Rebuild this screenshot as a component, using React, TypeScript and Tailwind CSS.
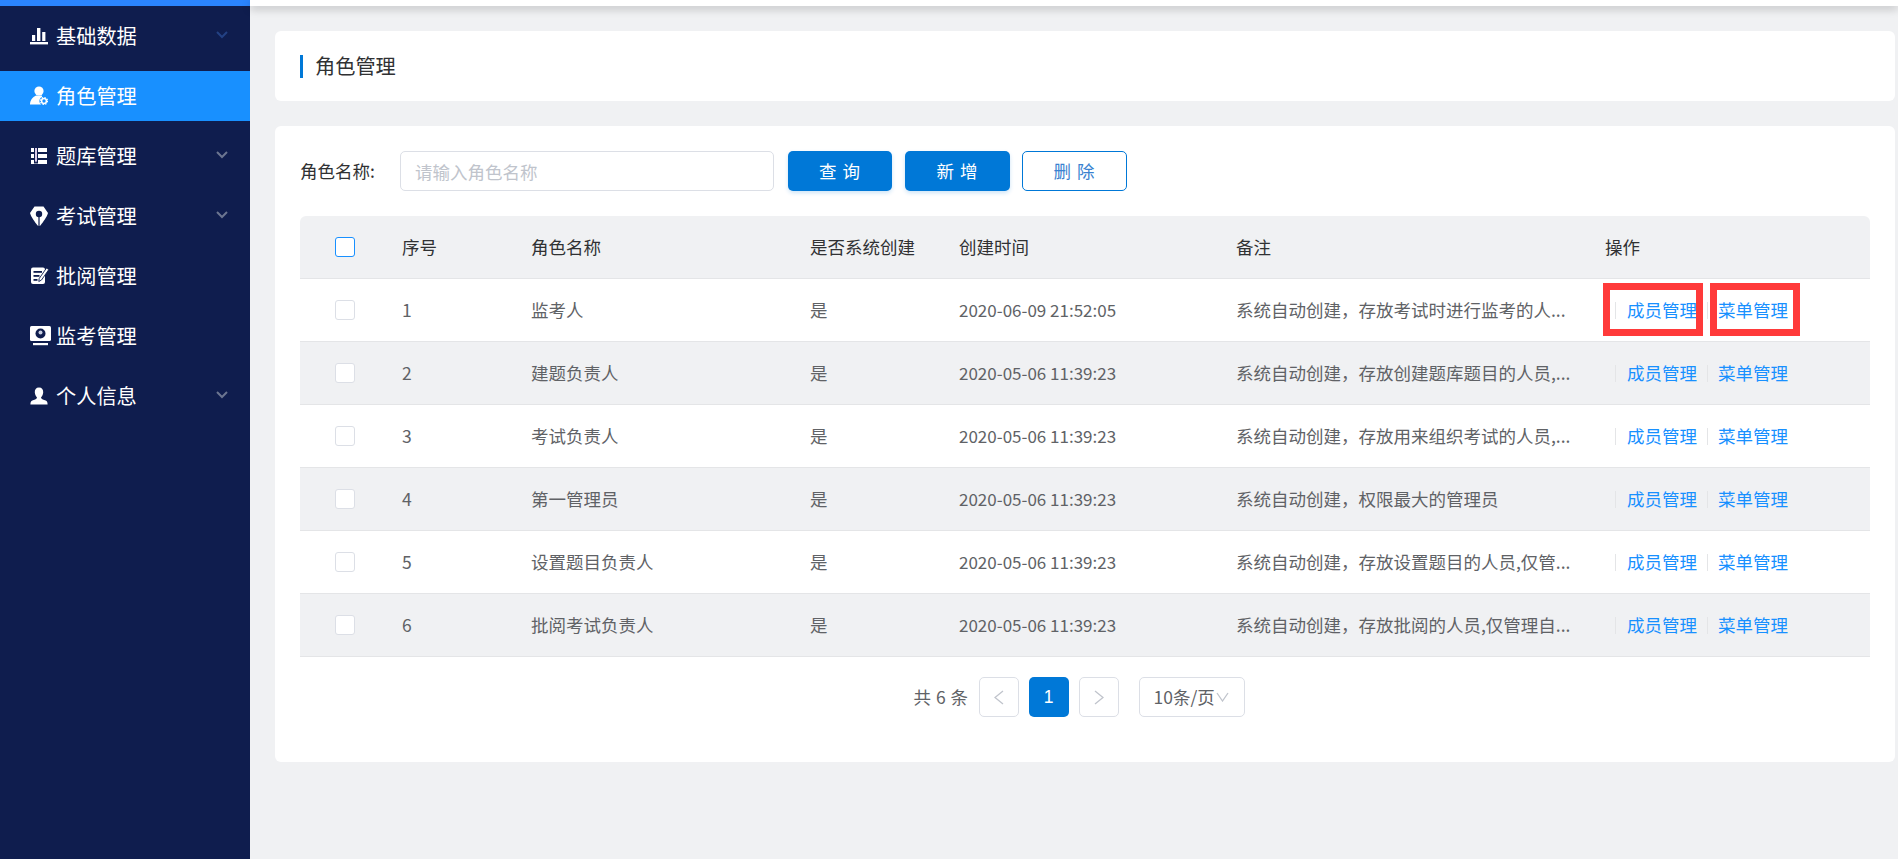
import type { ReactNode } from 'react';

const DARK = '#0f1d4e';
const ACTIVE = '#1890ff';

function ChartIcon() {
  return (
    <svg width="18" height="18" viewBox="0 0 18 18" fill="white">
      <rect x="0" y="15" width="18" height="2.4" />
      <rect x="2" y="8" width="3.2" height="6" />
      <rect x="7" y="1" width="3.4" height="13" />
      <rect x="12.2" y="5" width="3.2" height="9" />
    </svg>
  );
}

function RoleIcon() {
  return (
    <svg width="18" height="20" viewBox="0 0 18 20" fill="white">
      <circle cx="9" cy="5" r="4.6" />
      <path d="M6 9.5 L12 9.5 L12.5 18.5 L0 18.5 C0 14.5 2.5 11 6 9.5 Z" />
      <circle cx="14" cy="15" r="4.6" fill={ACTIVE} />
      <circle cx="14" cy="15" r="2.4" fill="none" stroke="white" strokeWidth="1.5" />
      <circle cx="14" cy="15" r="3.5" fill="none" stroke="white" strokeWidth="1.2" strokeDasharray="1.4 1.35" />
    </svg>
  );
}

function BankIcon() {
  return (
    <svg width="18" height="18" viewBox="0 0 18 18" fill="white">
      <rect x="1" y="1" width="16" height="4" />
      <rect x="1" y="7" width="16" height="4" />
      <rect x="1" y="13" width="16" height="4" />
      <rect x="4" y="0.5" width="4" height="16" fill={DARK} />
      <path d="M5 1 H7 V15.5 L6 14 L5 15.5 Z" fill="#d9cbe8" />
    </svg>
  );
}

function PinIcon() {
  return (
    <svg width="18" height="20" viewBox="0 0 18 20" fill="white">
      <path d="M4.5 0.5 H13.5 L18 7 C17 11 13 16 10.5 19.5 H7.5 C5 16 1 11 0 7 Z" />
      <circle cx="9" cy="8" r="3.2" fill={DARK} />
      <rect x="8.4" y="10.5" width="1.2" height="9" fill={DARK} />
    </svg>
  );
}

function ReviewIcon() {
  return (
    <svg width="19" height="18" viewBox="0 0 19 18">
      <rect x="1" y="0.5" width="14" height="16.5" rx="2" fill="white" />
      <rect x="3.5" y="4" width="8.5" height="1.8" fill={DARK} />
      <rect x="3.5" y="8" width="6" height="1.8" fill={DARK} />
      <rect x="3.5" y="12" width="4" height="1.8" fill={DARK} />
      <path d="M16.5 1 L18.8 2.6 L11.5 13 L8.8 14.5 L9.2 11.5 Z" fill="white" stroke={DARK} strokeWidth="0.9" />
    </svg>
  );
}

function MonitorIcon() {
  return (
    <svg width="21" height="20" viewBox="0 0 21 20" fill="white">
      <rect x="0" y="0" width="21" height="15" rx="1.5" />
      <rect x="3" y="17" width="15" height="2.2" />
      <circle cx="10.5" cy="7.5" r="5" fill={DARK} />
      <circle cx="10.5" cy="6.4" r="2" fill="#c7cde0" />
    </svg>
  );
}

function UserIcon() {
  return (
    <svg width="18" height="18" viewBox="0 0 18 18" fill="white">
      <path d="M9 0.5 C12 0.5 13.4 2.6 13.2 5.4 C13 8 11.6 9.6 11 10.4 C11.2 12 13 12.6 15 13.2 C16.8 13.8 17.6 14.8 17.6 17.6 H0.4 C0.4 14.8 1.2 13.8 3 13.2 C5 12.6 6.8 12 7 10.4 C6.4 9.6 5 8 4.8 5.4 C4.6 2.6 6 0.5 9 0.5 Z" />
    </svg>
  );
}

interface MenuItem {
  label: string;
  icon: ReactNode;
  active?: boolean;
  arrow?: string;
}

const menu: MenuItem[] = [
  { label: '基础数据', icon: <ChartIcon />, arrow: 'text-[#234183]' },
  { label: '角色管理', icon: <RoleIcon />, active: true },
  { label: '题库管理', icon: <BankIcon />, arrow: 'text-[#6b7590]' },
  { label: '考试管理', icon: <PinIcon />, arrow: 'text-[#6b7590]' },
  { label: '批阅管理', icon: <ReviewIcon /> },
  { label: '监考管理', icon: <MonitorIcon /> },
  { label: '个人信息', icon: <UserIcon />, arrow: 'text-[#6b7590]' },
];

const rows = [
  { id: 1, name: '监考人', time: '2020-06-09 21:52:05', note: '系统自动创建，存放考试时进行监考的人...' },
  { id: 2, name: '建题负责人', time: '2020-05-06 11:39:23', note: '系统自动创建，存放创建题库题目的人员,...' },
  { id: 3, name: '考试负责人', time: '2020-05-06 11:39:23', note: '系统自动创建，存放用来组织考试的人员,...' },
  { id: 4, name: '第一管理员', time: '2020-05-06 11:39:23', note: '系统自动创建，权限最大的管理员' },
  { id: 5, name: '设置题目负责人', time: '2020-05-06 11:39:23', note: '系统自动创建，存放设置题目的人员,仅管...' },
  { id: 6, name: '批阅考试负责人', time: '2020-05-06 11:39:23', note: '系统自动创建，存放批阅的人员,仅管理自...' },
];

const cols = 'grid grid-cols-[102px_129px_279px_149px_277px_369px_1fr] items-center';

export default function App() {
  return (
    <div className="flex h-screen overflow-hidden font-['Noto_Sans_CJK_SC','Noto_Sans',sans-serif] text-[17.5px]">
      {/* Sidebar */}
      <aside className="w-[250px] shrink-0 bg-[#0f1d4e] text-white">
        <div className="h-[6px] bg-[#2a84ff]" />
        <nav className="flex flex-col gap-[10px] pt-[5px]">
          {menu.map((m) => (
            <div
              key={m.label}
              className={`flex h-[50px] items-center pl-[30px] pr-[22px] text-[20.2px] ${m.active ? 'bg-[#1890ff]' : ''}`}
            >
              <span className="flex w-[26px] shrink-0 items-center">{m.icon}</span>
              <span className="flex-1 pt-[1px]">{m.label}</span>
              {m.arrow && (
                <svg width="12" height="8" viewBox="0 0 12 8" fill="none" stroke="currentColor" strokeWidth="2" className={`-mt-[3px] ${m.arrow}`}>
                  <polyline points="1,1 6,6 11,1" />
                </svg>
              )}
            </div>
          ))}
        </nav>
      </aside>

      {/* Main */}
      <main className="flex flex-1 flex-col bg-[#f0f1f3]">
        <div className="h-[6px] shrink-0 bg-white shadow-[0_3px_9px_rgba(0,0,0,0.22)]" />
        <div className="pl-[25px] pr-[3px] pt-[25px]">
          <div className="flex h-[70px] items-center rounded-[6px] bg-white pl-[25px]">
            <span className="mr-[12px] h-[23px] w-[3px] bg-[#0078d7]" />
            <span className="text-[20.2px] text-[#303133]">角色管理</span>
          </div>

          <div className="mt-[25px] rounded-[6px] bg-white px-[25px] pb-[45px] pt-[25px]">
            {/* Search bar */}
            <div className="flex h-[40px] items-center">
              <span className="w-[100px] text-[#303133]">角色名称:</span>
              <input
                placeholder="请输入角色名称"
                className="h-full w-[374px] rounded-[5px] border border-[#dcdfe6] px-[14px] text-[17.5px] outline-none placeholder:text-[#c0c4cc]"
              />
              <button className="ml-[14px] h-full w-[104px] rounded-[5px] bg-[#0078d7] tracking-[1px] text-white shadow-[0_2px_4px_rgba(0,120,215,0.2)]">查 询</button>
              <button className="ml-[13px] h-full w-[105px] rounded-[5px] bg-[#0078d7] tracking-[1px] text-white shadow-[0_2px_4px_rgba(0,120,215,0.2)]">新 增</button>
              <button className="ml-[12px] h-full w-[105px] rounded-[5px] border border-[#0078d7] bg-white tracking-[1px] text-[#3a82d0]">删 除</button>
            </div>

            {/* Table */}
            <div className="mt-[25px]">
              <div className={`${cols} h-[63px] rounded-t-[6px] border-b border-[#e4e5e7] bg-[#f0f1f3] text-[#303133]`}>
                <span className="ml-[35px] h-5 w-5 rounded-[3px] border border-[#1890ff] bg-white" />
                <span>序号</span>
                <span>角色名称</span>
                <span>是否系统创建</span>
                <span>创建时间</span>
                <span>备注</span>
                <span>操作</span>
              </div>
              {rows.map((r, i) => (
                <div
                  key={r.id}
                  className={`${cols} h-[63px] border-b border-[#e4e5e7] text-[#606266] ${i % 2 === 1 ? 'bg-[#f0f1f3]' : 'bg-white'}`}
                >
                  <span className="ml-[35px] h-5 w-5 rounded-[3px] border border-[#dcdfe6] bg-white" />
                  <span>{r.id}</span>
                  <span>{r.name}</span>
                  <span>是</span>
                  <span className="text-[17px]">{r.time}</span>
                  <span>{r.note}</span>
                  <div className="relative flex h-full items-center pl-[10px] text-[#1890ff]">
                    <span className="h-[17px] w-px bg-[#e4e5e7]" />
                    <span className="ml-[11px]">成员管理</span>
                    <span className="ml-[10px] h-[17px] w-px bg-[#e4e5e7]" />
                    <span className="ml-[10px]">菜单管理</span>
                    {i === 0 && (
                      <>
                        <span className="pointer-events-none absolute left-[-2px] top-[4px] h-[53px] w-[100px] border-[7px] border-[#ff3a3a]" />
                        <span className="pointer-events-none absolute left-[105px] top-[4px] h-[53px] w-[90px] border-[7px] border-[#ff3a3a]" />
                      </>
                    )}
                  </div>
                </div>
              ))}
            </div>

            {/* Pagination */}
            <div className="mt-[20px] flex h-[40px] items-center justify-center pr-[12px] text-[#606266]">
              <span className="mr-[10px] tracking-[0.5px]">共 6 条</span>
              <span className="flex h-[40px] w-[40px] items-center justify-center rounded-[5px] border border-[#dcdfe6] text-[#c0c4cc]">
                <svg width="10" height="15" viewBox="0 0 10 15" fill="none" stroke="currentColor" strokeWidth="1.3">
                  <polyline points="9,1 1,7.5 9,14" />
                </svg>
              </span>
              <span className="mx-[10px] flex h-[40px] w-[40px] items-center justify-center rounded-[5px] bg-[#0078d7] font-['Liberation_Sans',sans-serif] text-white">
                1
              </span>
              <span className="flex h-[40px] w-[40px] items-center justify-center rounded-[5px] border border-[#dcdfe6] text-[#c0c4cc]">
                <svg width="10" height="15" viewBox="0 0 10 15" fill="none" stroke="currentColor" strokeWidth="1.3">
                  <polyline points="1,1 9,7.5 1,14" />
                </svg>
              </span>
              <span className="ml-[20px] flex h-[40px] w-[106px] items-center rounded-[5px] border border-[#dcdfe6] pl-[14px]">
                10条/页
                <svg width="13" height="10" viewBox="0 0 13 10" fill="none" stroke="#c0c4cc" strokeWidth="1.3" className="ml-[1px]">
                  <polyline points="1,1 6.5,9 12,1" />
                </svg>
              </span>
            </div>
          </div>
        </div>
      </main>
    </div>
  );
}
